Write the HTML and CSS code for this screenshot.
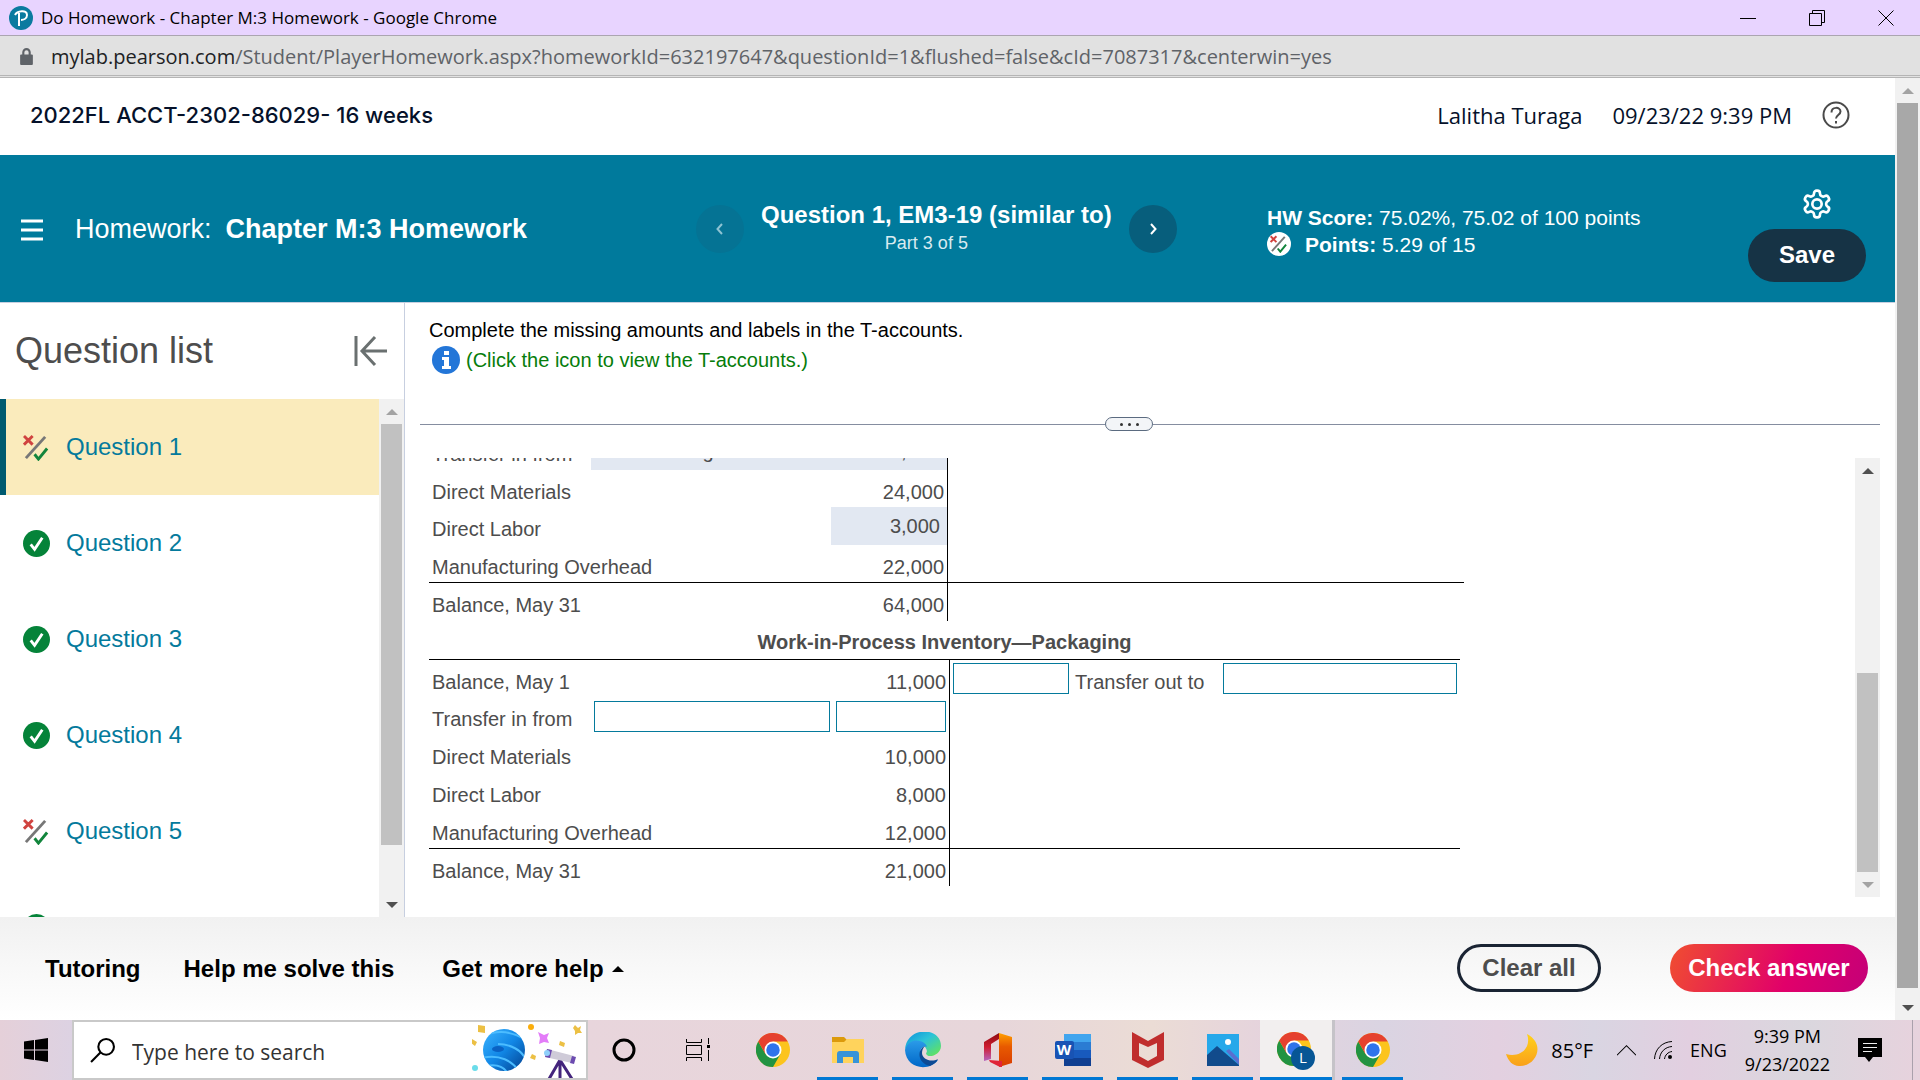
FILE: index.html
```html
<!DOCTYPE html>
<html lang="en">
<head>
<meta charset="utf-8">
<title>Do Homework - Chapter M:3 Homework</title>
<link rel="stylesheet" href="styles.css">
</head>
<body>
<svg class="defs" width="0" height="0" aria-hidden="true">
  <defs>
    <linearGradient id="edgeTop" x1="0" y1="0" x2="1" y2="1"><stop offset="0" stop-color="#0c8fdc"/><stop offset=".45" stop-color="#2cc3d8"/><stop offset="1" stop-color="#6be84a"/></linearGradient>
    <linearGradient id="edgeLow" x1="0" y1="0" x2="0" y2="1"><stop offset="0" stop-color="#2b9be8"/><stop offset="1" stop-color="#0067c8"/></linearGradient>
    <linearGradient id="officeL" x1="0" y1="0" x2="0" y2="1"><stop offset="0" stop-color="#8c0a10"/><stop offset=".5" stop-color="#cf1c30"/><stop offset="1" stop-color="#b565c0"/></linearGradient>
    <linearGradient id="officeR" x1="0" y1="0" x2="0" y2="1"><stop offset="0" stop-color="#ffa000"/><stop offset=".4" stop-color="#e85a00"/><stop offset="1" stop-color="#d83b01"/></linearGradient>
    <linearGradient id="moon" x1="0" y1="0" x2="0" y2="1"><stop offset="0" stop-color="#ffd21c"/><stop offset="1" stop-color="#f9a01b"/></linearGradient>
    <linearGradient id="planet" x1="0" y1="0" x2="1" y2="1"><stop offset="0" stop-color="#3cb4ff"/><stop offset=".5" stop-color="#1187e6"/><stop offset="1" stop-color="#04418f"/></linearGradient>
    <clipPath id="planetClip"><circle cx="32" cy="34" r="21"/></clipPath>
    <symbol id="chrome" viewBox="0 0 48 48">
      <circle cx="24" cy="24" r="24" fill="#fcc41d"/>
      <path d="M24 24 13.600 30 3.200 12A24 24 0 0 0 24 48L34.400 30Z" fill="#229342"/>
      <path d="M3.200 12A24 24 0 0 1 44.800 12H24L13.600 30Z" fill="#e5412f"/>
      <circle cx="24" cy="24" r="12" fill="#fff"/><circle cx="24" cy="24" r="9.500" fill="#2f73ea"/>
    </symbol>
    <symbol id="correct" viewBox="0 0 28 28"><circle cx="14" cy="14" r="14" fill="#058339"/><path d="M8 15l4 5 8-12" fill="none" stroke="#fff" stroke-width="3"/></symbol>
    <symbol id="partial" viewBox="0 0 28 28"><path d="M1 2l9 9M10 2l-9 9" stroke="#d0433f" stroke-width="3"/><path d="M3 25 23 3" stroke="#777" stroke-width="3"/><path d="M12 21l4 5 9-11" fill="none" stroke="#12853c" stroke-width="3"/></symbol>
  </defs>
</svg>

<header class="titlebar">
  <svg class="favicon" viewBox="0 0 24 24"><circle cx="12" cy="12" r="12" fill="#0a7a9f"/><path d="M10 20V7M6 9c2-4 12-6 12 0 0 4-4 5-6 5" fill="none" stroke="#fff" stroke-width="2"/></svg>
  <span class="window-title">Do Homework - Chapter M:3 Homework - Google Chrome</span>
  <div class="window-controls">
    <button aria-label="Minimize"><svg viewBox="0 0 16 16"><path d="M0 8.500h16"/></svg></button>
    <button aria-label="Restore"><svg viewBox="0 0 16 16"><path d="M.5 3.500h12v12h-12zM3.500 3.500v-3h12v12h-3"/></svg></button>
    <button aria-label="Close"><svg viewBox="0 0 16 16"><path d="M.5.5l15 15M15.500.5l-15 15"/></svg></button>
  </div>
</header>
<div class="urlbar">
  <svg class="lock" viewBox="0 0 12 16"><path d="M3 7V4a3 3 0 0 1 6 0v3" fill="none" stroke="#5f6368" stroke-width="2"/><rect y="6" width="12" height="10" rx="1" fill="#5f6368"/></svg>
  <span class="url"><b>mylab.pearson.com</b>/Student/PlayerHomework.aspx?homeworkId=632197647&amp;questionId=1&amp;flushed=false&amp;cId=7087317&amp;centerwin=yes</span>
</div>

<div class="viewport">
  <div class="page">
    <div class="course">
      <h1>2022FL ACCT-2302-86029- 16 weeks</h1>
      <span class="user">Lalitha Turaga</span>
      <span class="stamp">09/23/22 9:39 PM</span>
      <button class="help" aria-label="Help"><svg viewBox="0 0 28 28"><circle cx="14" cy="14" r="12.500"/><path d="M9.500 11.500c0-6 9-6 9-1 0 3.500-4.500 3.500-4.500 7"/><path d="M14 20v2.500"/></svg></button>
    </div>

    <div class="banner">
      <div class="assignment">
        <button class="menu" aria-label="Menu"><svg viewBox="0 0 22 22"><path d="M0 2h22M0 11h22M0 20h22"/></svg></button>
        <span>Homework:</span><strong>Chapter M:3 Homework</strong>
      </div>
      <div class="stepper">
        <button class="step" disabled aria-label="Previous question"><svg viewBox="0 0 12 12"><path d="M8 1 3.500 6 8 11"/></svg></button>
        <div class="current"><strong>Question 1, EM3-19 (similar to)</strong><span>Part 3 of 5</span></div>
        <button class="step" aria-label="Next question"><svg viewBox="0 0 12 12"><path d="M4 1l4.500 5L4 11"/></svg></button>
      </div>
      <div class="score">
        <div><strong>HW Score:</strong> 75.02%, 75.02 of 100 points</div>
        <div class="points"><span class="badge"><svg viewBox="0 0 28 28"><use href="#partial"/></svg></span><span><strong>Points:</strong> 5.29 of 15</span></div>
      </div>
      <div class="tools">
        <button class="gear" aria-label="Settings"><svg viewBox="0 0 24 24"><path d="M12.220 2h-.44a2 2 0 0 0-2 2v.18a2 2 0 0 1-1 1.730l-.43.25a2 2 0 0 1-2 0l-.15-.08a2 2 0 0 0-2.730.73l-.22.38a2 2 0 0 0 .73 2.730l.15.1a2 2 0 0 1 1 1.720v.51a2 2 0 0 1-1 1.740l-.15.09a2 2 0 0 0-.73 2.730l.22.38a2 2 0 0 0 2.730.73l.15-.08a2 2 0 0 1 2 0l.43.25a2 2 0 0 1 1 1.730V20a2 2 0 0 0 2 2h.44a2 2 0 0 0 2-2v-.18a2 2 0 0 1 1-1.730l.43-.25a2 2 0 0 1 2 0l.15.08a2 2 0 0 0 2.730-.73l.22-.39a2 2 0 0 0-.73-2.730l-.15-.08a2 2 0 0 1-1-1.740v-.5a2 2 0 0 1 1-1.740l.15-.09a2 2 0 0 0 .73-2.730l-.22-.38a2 2 0 0 0-2.730-.73l-.15.08a2 2 0 0 1-2 0l-.43-.25a2 2 0 0 1-1-1.730V4a2 2 0 0 0-2-2z"/><circle cx="12" cy="12" r="3.500"/></svg></button>
        <button class="save">Save</button>
      </div>
    </div>

    <div class="workspace">
      <aside class="sidebar">
        <div class="sidebar-head"><h2>Question list</h2><button aria-label="Collapse list"><svg viewBox="0 0 34 32"><path d="M2 1v30M33 16H9M21 2 8 16l13 14"/></svg></button></div>
        <div class="list-wrap">
          <nav class="questions">
            <a class="active" href="#q1"><svg><use href="#partial"/></svg>Question 1</a>
            <a href="#q2"><svg><use href="#correct"/></svg>Question 2</a>
            <a href="#q3"><svg><use href="#correct"/></svg>Question 3</a>
            <a href="#q4"><svg><use href="#correct"/></svg>Question 4</a>
            <a href="#q5"><svg><use href="#partial"/></svg>Question 5</a>
            <a href="#q6" aria-label="Question 6"><svg><use href="#correct"/></svg></a>
          </nav>
          <div class="scrollbar list-scroll"><i class="up dim"></i><span class="thumb"></span><i class="down"></i></div>
        </div>
      </aside>

      <main class="content">
        <div class="prompt">
          <p>Complete the missing amounts and labels in the T-accounts.</p>
          <a class="info" href="#accounts"><svg viewBox="0 0 28 28"><circle cx="14" cy="14" r="14" fill="#2376d8"/><path d="M12 5h5v4h-5zM10 11h7v9h2v3h-9v-3h2v-6h-2z" fill="#fff"/></svg>(Click the icon to view the T-accounts.)</a>
        </div>
        <div class="divider"><button aria-label="Resize panes"><i></i><i></i><i></i></button></div>
        <div class="answer">
          <div class="accounts">
            <table class="taccount first">
              <colgroup><col class="a1"><col class="a2"><col class="a3"><col></colgroup>
              <tbody>
                <tr><td>Transfer in from</td><td class="filled left">WIP—Mixing</td><td class="num filled">38,000</td><td></td></tr>
                <tr><td>Direct Materials</td><td></td><td class="num">24,000</td><td></td></tr>
                <tr><td>Direct Labor</td><td></td><td class="num filled">3,000</td><td></td></tr>
                <tr class="rule"><td>Manufacturing Overhead</td><td></td><td class="num">22,000</td><td></td></tr>
                <tr><td>Balance, May 31</td><td></td><td class="num">64,000</td><td></td></tr>
              </tbody>
            </table>
            <table class="taccount second">
              <caption>Work-in-Process Inventory—Packaging</caption>
              <colgroup><col class="b1"><col class="b2"><col class="b3"><col class="b4"><col class="b5"><col></colgroup>
              <tbody>
                <tr><td>Balance, May 1</td><td></td><td class="num">11,000</td><td class="box out"><input aria-label="Transfer out amount"></td><td>Transfer out to</td><td class="box out-to"><input aria-label="Transfer out to"></td></tr>
                <tr><td>Transfer in from</td><td class="box in-from"><input aria-label="Transfer in from"></td><td class="box in num"><input aria-label="Transfer in amount"></td><td></td><td></td><td></td></tr>
                <tr><td>Direct Materials</td><td></td><td class="num">10,000</td><td></td><td></td><td></td></tr>
                <tr><td>Direct Labor</td><td></td><td class="num">8,000</td><td></td><td></td><td></td></tr>
                <tr class="rule"><td>Manufacturing Overhead</td><td></td><td class="num">12,000</td><td></td><td></td><td></td></tr>
                <tr><td>Balance, May 31</td><td></td><td class="num">21,000</td><td></td><td></td><td></td></tr>
              </tbody>
            </table>
          </div>
          <div class="scrollbar answer-scroll"><i class="up"></i><span class="thumb"></span><i class="down dim"></i></div>
        </div>
      </main>
    </div>

    <footer class="actions">
      <a href="#tutoring">Tutoring</a>
      <a href="#solve">Help me solve this</a>
      <button class="more">Get more help<i></i></button>
      <button class="clear">Clear all</button>
      <button class="check">Check answer</button>
    </footer>
  </div>
  <div class="scrollbar page-scroll"><i class="up dim"></i><span class="thumb"></span><i class="down"></i></div>
</div>

<div class="taskbar">
  <button class="start" aria-label="Start"><svg viewBox="0 0 24 24"><path d="M0 3.500 10 2v9.500H0zM11 2 24 0v11.500H11zM0 12.500h10V22L0 20.500zM11 12.500h13V24l-13-2z"/></svg></button>
  <label class="search">
    <svg class="glass" viewBox="0 0 24 24"><circle cx="15.500" cy="8.500" r="7.500"/><path d="M10 14 1 23"/></svg>
    <input placeholder="Type here to search" aria-label="Search">
    <svg class="scene" viewBox="0 6 112 56">
      <circle cx="32" cy="34" r="21" fill="url(#planet)"/>
      <g clip-path="url(#planetClip)" fill="none" stroke="#4bbcff" stroke-width="2"><path d="M8 22c14-8 30-8 46 2M10 42c16-4 32 2 38 16M14 50c10-2 18 0 22 8M26 28c12 0 24 6 28 16"/><ellipse cx="26" cy="33" rx="6" ry="3" fill="#0a62c4" stroke="none"/></g>
      <g fill="#ecc044"><path d="M6 9l7 1 0 7-7-1zM103 9l3 3 3-2-1 4 2 3-4 0-3 2 0-4-2-3z"/><path d="M0 23l5 3-2 4-4-3zM88 25l5 2-1 4-5-2zM60 38l4 2-1 4-5-2z"/></g>
      <circle cx="59" cy="11" r="3" fill="#fbae0c"/><circle cx="3" cy="52" r="3" fill="#6adcea"/>
      <path d="M66 16l6 3 5-2-2 5 2 5-5-1-5 2 1-6z" fill="#e37cf8"/>
      <path d="M88 42v21M88 44 77 63M88 44l12 19" stroke="#43247c" stroke-width="3"/>
      <path d="M75 33l27 7-2 7-27-6z" fill="#cfcbd8"/><path d="M75 33l5 1-2 8-5-1zM100 40l4 1-2 7-4-1z" fill="#6c4bb0"/><circle cx="75" cy="37" r="3" fill="#8fd0fa"/>
    </svg>
  </label>
  <div class="apps">
    <button class="cortana" aria-label="Cortana"><svg viewBox="0 0 24 24"><circle cx="12" cy="12" r="10" fill="none" stroke="#000" stroke-width="3"/></svg></button>
    <button aria-label="Task view"><svg viewBox="0 0 24 24" fill="none" stroke="#000"><path d="M.5 1v3.500h15V1M.5 7.500h15v9H.5zM.5 23v-3.500h15V23M22.500 0v6M22.500 12v11"/><path d="M21 7h3v3h-3z" fill="#000" stroke="none"/></svg></button>
    <button aria-label="Chrome"><svg class="big"><use href="#chrome"/></svg></button>
    <button class="open" aria-label="File Explorer"><svg class="big" viewBox="0 0 34 34"><path d="M1 4h12l3 3-2 4H1z" fill="#dc9a0c"/><path d="M1 9h12l3-3h17v24H1z" fill="#ffd35c"/><path d="M6 30V21q0-3 3-3h16q3 0 3 3v9h-6v-6H12v6z" fill="#3893d8"/></svg></button>
    <button class="open" aria-label="Edge"><svg class="large" viewBox="0 0 36 36"><path d="M0 18C1-6 36-6 36 14c0 10-15 13-15 7 2-1 1-7-7-10C8 10 2 13 0 18z" fill="url(#edgeTop)"/><path d="M0 18C4 4 20 8 22 15c-5-2-9 4-5 10 4 5 12 5 16 3C24 40 1 37 0 18z" fill="url(#edgeLow)"/><path d="M20 14c-8 3-8 17 5 20 4-2 7-4 8-7-7 4-16 0-16-6 0-3 1-5 3-7z" fill="#0d4a94"/></svg></button>
    <button class="open" aria-label="Office"><svg class="big" viewBox="0 0 34 34"><path d="M3 9 18 0v6l-8 5v15l-7 2z" fill="url(#officeL)"/><path d="M18 0l13 4v26l-13 4z" fill="url(#officeR)"/><path d="M8 27l13 1v6h-2l-10-5z" fill="#e02438"/></svg></button>
    <button class="open" aria-label="Word"><svg class="large" viewBox="0 0 36 36"><path d="M9 2h27v8H9z" fill="#41a5ee"/><path d="M9 10h27v8H9z" fill="#2b7cd3"/><path d="M9 18h27v8H9z" fill="#185abd"/><path d="M9 26h27v8H9z" fill="#103f91"/><rect y="9" width="19" height="18" rx="2" fill="#1853b4"/><text x="9" y="23" text-anchor="middle" class="glyph word">W</text></svg></button>
    <button class="open" aria-label="McAfee"><svg class="large" viewBox="0 0 36 36"><path d="M2 0l16 9 16-9v28l-16 8-16-8zM9 11v13l9 5 9-5V11l-9 4z" fill="#c02d2d" fill-rule="evenodd"/></svg></button>
    <button class="open" aria-label="Photos"><svg class="big" viewBox="0 0 34 34"><rect x="1" y="1" width="32" height="32" fill="#26a8ea"/><path d="M20 18l3-2 10 10v6z" fill="#5a6fd0"/><path d="M1 22l10-9 22 19v1H1z" fill="#114b8c"/><circle cx="22" cy="9" r="3" fill="#fff"/></svg></button>
    <button class="open focused" aria-label="Chrome, profile L"><svg class="profile" viewBox="0 0 40 40"><use href="#chrome" x="1" y="2" width="34" height="34"/><circle cx="27" cy="28" r="12" fill="#075695"/><text x="27" y="33" text-anchor="middle" class="glyph">L</text></svg></button>
    <button class="open" aria-label="Chrome window"><svg class="big"><use href="#chrome"/></svg></button>
  </div>
  <div class="tray">
    <svg class="moon" viewBox="0 0 34 34"><path d="M22 1C42 12 30 34 14 33 8 33 3 28 1 21c14 4 26-6 21-20z" fill="url(#moon)"/></svg>
    <span class="temp">85°F</span>
    <svg class="caret" viewBox="0 0 18 10"><path d="M0 9.500l9-9 9 9"/></svg>
    <svg class="wifi" viewBox="0 0 18 18"><path d="M.5 18C1 8 8 1 18 .5M5.500 18C6 11 11 6 18 5.500M10.500 18c.5-4 3.500-7 7.500-7.500"/><circle cx="16" cy="16" r="2" fill="#000" stroke="none"/></svg>
    <span class="lang">ENG</span>
    <div class="clock"><span>9:39 PM</span><span>9/23/2022</span></div>
    <svg class="note" viewBox="0 0 24 24"><path d="M0 0h24v19H15l-4 5-4-5H0z"/><path d="M5 5.500h14M5 9.500h14M5 13.500h9" stroke="#eee"/></svg>
    <span class="desktop"></span>
  </div>
</div>
</body>
</html>
```
FILE: styles.css
```css
* { box-sizing: border-box; }
body {
  margin: 0;
  height: 100vh;
  display: flex;
  flex-direction: column;
  overflow: hidden;
  background: #fff;
  font-family: "Liberation Sans", Arial, sans-serif;
  font-size: 20px;
}
button { border: 0; padding: 0; background: none; font: inherit; color: inherit; }
svg { display: block; flex: none; }
a { color: inherit; text-decoration: none; }
h1, h2, p { margin: 0; font-weight: 400; }
.defs { position: absolute; }

/* Browser window */
.titlebar, .urlbar { flex: none; display: flex; align-items: center; font-family: "Open Sans", "Noto Sans", sans-serif; white-space: nowrap; }
.titlebar { height: 36px; padding-left: 9px; gap: 8px; background: #e8d4ff; border-bottom: 1px solid #aba5b0; font-size: 17px; }
.favicon { width: 24px; height: 24px; }
.window-controls { margin-left: auto; display: flex; height: 32px; }
.window-controls button { width: 69px; display: grid; place-items: center; }
.window-controls svg { width: 16px; height: 16px; fill: none; stroke: #000; }
.urlbar { height: 42px; padding: 2px 0 0 20px; gap: 18px; background: #e1e1e1; border-bottom: 3px double #b5b5b5; font-size: 20px; color: #5f6368; }
.lock { width: 13px; height: 17px; }
.url b { font-weight: 400; color: #202124; }

.viewport { flex: 1; min-height: 0; display: flex; }
.page { flex: 1; min-width: 0; display: flex; flex-direction: column; }

/* Scrollbars */
.scrollbar { flex: none; width: 25px; display: flex; flex-direction: column; align-items: center; background: #f1f1f1; }
.scrollbar .thumb { width: 21px; background: #c1c1c1; }
.scrollbar i { flex: none; width: 12px; height: 25px; display: grid; place-items: center; }
.scrollbar i::before { content: ""; border: 6px solid transparent; }
.scrollbar .up::before { border-top: 0; border-bottom-color: #505050; }
.scrollbar .down::before { border-bottom: 0; border-top-color: #505050; }
.scrollbar .up.dim::before { border-bottom-color: #a3a3a3; }
.scrollbar .down.dim::before { border-top-color: #a3a3a3; }
.page-scroll .thumb { flex: 1; margin-bottom: 7px; background: #a8a8a8; }
.list-scroll .thumb { flex: 421; }
.list-scroll::after { content: ""; flex: 47; order: 1; }
.list-scroll .down { order: 2; }
.answer-scroll::before { content: ""; flex: 190; order: 1; }
.answer-scroll .thumb { flex: 199; order: 2; }
.answer-scroll .down { order: 3; }

/* Course bar */
.course { flex: none; height: 77px; display: flex; align-items: center; padding: 0 45px 3px 30px; color: #05112a; font-family: "Open Sans", "Noto Sans", sans-serif; font-size: 22px; }
.course h1 { margin-right: auto; font-family: Inter, sans-serif; font-size: 22px; font-weight: 500; }
.user { margin-right: 30px; }
.stamp { margin-right: 30px; }
.help svg { width: 28px; height: 28px; fill: none; stroke: #4a4a4a; stroke-width: 2; }

/* Banner */
.banner { flex: none; height: 148px; display: grid; grid-template-columns: 696fr 571fr 481fr 147fr; align-items: center; background: #007a9c; border-bottom: 1px solid #c7cfe0; color: #fff; white-space: nowrap; }
.assignment { display: flex; align-items: center; padding: 2px 0 0 21px; font-size: 27px; }
.menu { margin-right: 32px; }
.menu svg { width: 22px; height: 22px; stroke: #fff; stroke-width: 3; }
.assignment strong { margin-left: 14px; }
.stepper { display: flex; align-items: center; gap: 17px; }
.step { width: 48px; height: 48px; border-radius: 50%; display: grid; place-items: center; background: #075e7c; }
.step:disabled { background: #057394; color: #8ec3d3; }
.step svg { width: 12px; height: 12px; fill: none; stroke: currentColor; stroke-width: 2; }
.current { display: flex; flex-direction: column; align-items: center; gap: 3px; padding-bottom: 2px; font-size: 24px; line-height: 28px; }
.current span { padding-right: 20px; font-size: 18px; line-height: 22px; color: #d9ebf0; }
.score { padding-top: 4px; font-size: 21px; line-height: 27px; }
.points { display: flex; align-items: center; gap: 14px; }
.badge { width: 24px; height: 24px; border-radius: 50%; background: #fff; display: grid; place-items: center; }
.badge svg { width: 18px; height: 18px; }
.tools { display: flex; flex-direction: column; align-items: flex-start; gap: 9px; padding-top: 12px; }
.gear { width: 138px; display: grid; place-items: center; }
.gear svg { width: 32px; height: 32px; fill: none; stroke: #fff; stroke-width: 2; }
.save { width: 118px; height: 53px; border-radius: 27px; background: #163345; font-size: 24px; font-weight: 700; }

/* Question list */
.workspace { flex: 1; min-height: 0; display: flex; }
.sidebar { flex: none; width: 405px; border-right: 1px solid #c7cfe0; display: flex; flex-direction: column; }
.sidebar-head { height: 96px; flex: none; display: flex; align-items: center; justify-content: space-between; padding: 0 16px 0 15px; color: #4d4d4d; }
.sidebar-head h2 { font-size: 36px; }
.sidebar-head svg { width: 34px; height: 32px; fill: none; stroke: #6a7070; stroke-width: 3; }
.list-wrap { flex: 1; min-height: 0; display: flex; }
.questions { flex: 1; overflow: hidden; }
.questions a { height: 96px; display: flex; align-items: center; gap: 16px; padding-left: 23px; font-size: 24px; color: #047a9c; }
.questions .active { padding-left: 17px; border-left: 6px solid #005a70; background: #faebbc; }
.questions svg { width: 27px; height: 27px; }

/* Question body */
.content { flex: 1; min-width: 0; display: flex; flex-direction: column; padding: 0 15px 20px; }
.prompt { height: 114px; flex: none; padding: 12px 9px 0; line-height: 30px; }
.info { display: inline-flex; align-items: center; gap: 6px; padding-left: 3px; color: #067d0b; }
.info svg { width: 28px; height: 28px; }
.divider { flex: none; height: 14px; display: flex; align-items: center; }
.divider::before, .divider::after { content: ""; height: 1px; background: #858da0; }
.divider::before { flex: 685; }
.divider::after { flex: 727; }
.divider button { width: 48px; height: 14px; border: 1px solid #5b6b80; border-radius: 7px; background: #f3f5f8; display: flex; align-items: center; justify-content: center; gap: 5px; }
.divider i { width: 3px; height: 3px; border-radius: 50%; background: #333; }
.answer { flex: 1; min-height: 0; margin-top: 27px; display: flex; justify-content: space-between; }
.accounts { overflow: hidden; display: flex; flex-direction: column; justify-content: flex-end; padding: 0 0 11px 9px; }

/* T-accounts */
.taccount { flex: none; table-layout: fixed; border-collapse: separate; border-spacing: 0; color: #4d4d4d; font-size: 20px; line-height: 24px; white-space: nowrap; }
.taccount tr { height: 38px; }
.first tr:nth-child(even) { height: 37px; }
.second tr:last-child { height: 37px; }
.taccount td { padding: 6px 3px 0; vertical-align: middle; }
.taccount td:nth-child(3) { border-right: 1px solid #000; }
.taccount .num { text-align: right; }
.taccount .rule td { height: 38px; border-bottom: 1px solid #000; }
.taccount .filled { padding: 0 7px; background: #e2e8f2; }
.first { width: 1035px; }
.second { width: 1031px; }
.second tbody tr:first-child td { border-top: 1px solid #000; }
.second caption { height: 38px; padding-top: 9px; font-weight: 700; }
.a1 { width: 162px; }
.a2 { width: 240px; }
.a3 { width: 117px; }
.b1 { width: 165px; }
.b2 { width: 242px; }
.b3 { width: 114px; }
.b4 { width: 122px; }
.b5 { width: 151px; }
.taccount .box { padding: 0 3px 0 0; }
.taccount .out { padding-left: 3px; }
.box input { display: block; width: 100%; height: 31px; border: 1px solid #047a9c; background: #fff; font: inherit; padding: 0 4px; }
.in-from input { width: 236px; }

/* Action bar */
.actions { flex: none; height: 103px; display: flex; align-items: center; padding: 0 27px 0 45px; background: linear-gradient(#f1f1f1, #fff); font-size: 24px; font-weight: 700; white-space: nowrap; }
.actions a { margin-right: 43px; }
.more { display: flex; align-items: center; gap: 8px; margin: 0 auto 0 5px; }
.more i { border: 6px solid transparent; border-top: 0; border-bottom-color: #000; }
.clear, .check { height: 48px; margin-bottom: 2px; border-radius: 24px; }
.clear { width: 144px; border: 3px solid #1a2433; margin-right: 69px; color: #4d4d4d; }
.check { width: 198px; background: linear-gradient(110deg, #f04e30, #e1006a 60%, #c40078); color: #fff; }

/* Taskbar */
.taskbar { flex: none; height: 60px; display: flex; align-items: stretch; background: linear-gradient(90deg, #e5d0d9, #dcd2e3 4%, #e8d5dc 30%, #e7d6da 52%, #ebdcd5 60%, #e5d3dd 66%, #dad4e2 72%, #e3d0e0 78%, #d9d5e2 83%, #e2cfe0 88%, #dad7de 94%, #e7d2dd); font-family: "Open Sans", "Noto Sans", sans-serif; }
.start { width: 72px; display: grid; place-items: center; }
.start svg { width: 24px; height: 24px; }
.search { width: 516px; border: 2px solid #c9c9c9; background: #fff; display: flex; align-items: center; padding-left: 16px; }
.search input { flex: 1; min-width: 0; margin-left: 17px; padding: 4px 0 0; border: 0; outline: 0; font: inherit; font-size: 21px; background: none; }
.search input::placeholder { color: #333; opacity: 1; }
.glass { width: 25px; height: 25px; fill: none; stroke: #000; stroke-width: 2; }
.scene { width: 112px; height: 56px; margin-right: 2px; }
.apps { display: flex; }
.apps button { width: 75px; display: grid; place-items: center; border: solid transparent; border-width: 0 7px; }
.apps .cortana { width: 72px; }
.apps svg { width: 24px; height: 24px; }
.apps .big { width: 34px; height: 34px; }
.apps .large { width: 36px; height: 36px; }
.apps .profile { width: 40px; height: 40px; }
.apps .open { background: linear-gradient(#0078d4, #0078d4) bottom / 100% 3px no-repeat padding-box; }
.apps .focused { border-width: 0; background: linear-gradient(#0078d4, #0078d4) bottom / 100% 3px no-repeat, #f2efef; border-right: 3px solid #c5c3c8; }
.glyph { font: 15px "Open Sans", sans-serif; fill: #fff; }
.word { font-weight: 700; }
.tray { margin-left: auto; display: flex; align-items: center; font-size: 20px; }
.tray svg { fill: none; stroke: #000; }
.tray .moon { width: 34px; height: 34px; margin-right: 12px; stroke: none; }
.temp { margin-right: 24px; }
.caret { width: 19px; height: 11px; margin-right: 18px; }
.wifi { width: 18px; height: 18px; margin-right: 18px; }
.lang { font-size: 18px; margin-right: 18px; }
.clock { display: flex; flex-direction: column; align-items: center; font-size: 18px; line-height: 28px; margin-right: 28px; }
.tray .note { width: 24px; height: 24px; fill: #000; stroke: none; margin-right: 30px; }
.desktop { align-self: stretch; width: 8px; border-left: 1px solid #aaa0ac; }
```
